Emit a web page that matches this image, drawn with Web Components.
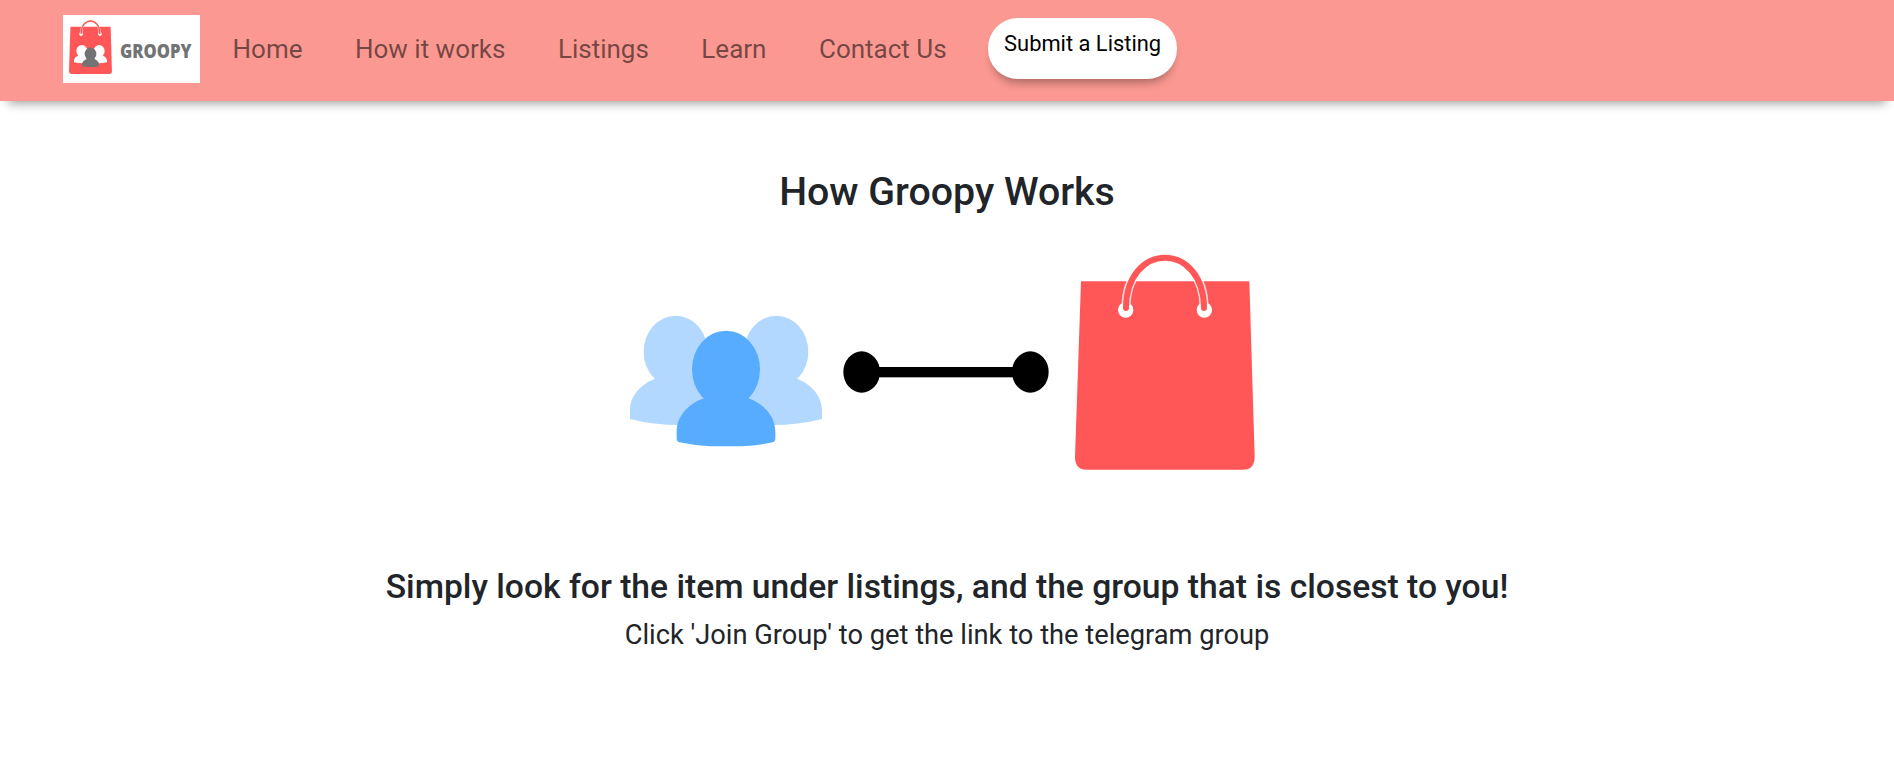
<!DOCTYPE html>
<html lang="en">
<head>
<meta charset="utf-8">
<title>Groopy</title>
<style>
    body {
        margin: 0;
        background: white;
        color: #212529;
        font-family: Roboto, "Liberation Sans", sans-serif;
    }
</style>
</head>
<body>
<groopy-navbar>
    <groopy-logo slot="brand"></groopy-logo>
    <nav-link href="#">Home</nav-link>
    <nav-link href="#">How it works</nav-link>
    <nav-link href="#">Listings</nav-link>
    <nav-link href="#">Learn</nav-link>
    <nav-link href="#">Contact Us</nav-link>
    <pill-button slot="action">Submit a Listing</pill-button>
</groopy-navbar>
<how-it-works>
    <span slot="title">How Groopy Works</span>
    <span slot="lead">Simply look for the item under listings, and the group that is closest to you!</span>
    <span slot="hint">Click 'Join Group' to get the link to the telegram group</span>
</how-it-works>

<script>
/// Base class: renders the subclass' markup into an open shadow root.
class GroopyElement extends HTMLElement {

    connectedCallback() {
        if (this.shadowRoot) {
            return
        }
        this.attachShadow({mode: "open"}).innerHTML = this.render()
    }

}

/// Three people. Colors come from --people-front and --people-back.
class PeopleIcon extends GroopyElement {

    render() {
        return `
            <style>
                :host { display: block; }
                svg { display: block; width: 100%; height: 100%; }
                .back { fill: var(--people-back, #b2d8ff); }
                .front { fill: var(--people-front, #58acff); }
            </style>
            <svg viewBox="0 0 576 396" preserveAspectRatio="none" aria-hidden="true">
                <g class="back">
                    <ellipse cx="137" cy="110" rx="96" ry="108"/>
                    <path d="M75 191C30 208 0 245 0 285V312Q70 330 150 330H230V140H100Z"/>
                    <ellipse cx="439" cy="110" rx="96" ry="108"/>
                    <path d="M501 191C546 208 576 245 576 285V312Q506 330 426 330H346V140H476Z"/>
                </g>
                <g class="front">
                    <ellipse cx="288" cy="163" rx="102" ry="116"/>
                    <path d="M222 250C170 268 140 308 140 350V370Q140 380 148 382Q190 391 240 394H336Q386 391 428 382Q436 380 436 370V350C436 308 406 268 355 250L330 220H246Z"/>
                </g>
            </svg>
        `
    }

}

/// Line with a dot on both ends.
class ConnectorIcon extends GroopyElement {

    render() {
        return `
            <style>
                :host { display: block; }
                svg { display: block; width: 100%; height: 100%; }
            </style>
            <svg viewBox="0 0 618 126" preserveAspectRatio="none" aria-hidden="true">
                <rect x="80" y="48" width="460" height="31"/>
                <ellipse cx="56" cy="63" rx="55" ry="62"/>
                <ellipse cx="562" cy="63" rx="55" ry="62"/>
            </svg>
        `
    }

}

class BagIcon extends GroopyElement {

    render() {
        return `
            <style>
                :host { display: block; }
                svg { display: block; width: 100%; height: 100%; }
            </style>
            <svg viewBox="0 0 540 648" preserveAspectRatio="none" aria-hidden="true">
                <path fill="#ff5757" d="M18 82H523L539 608Q539 647 503 647H35Q0 647 0 608Z"/>
                <circle cx="152" cy="168" r="23" fill="white"/>
                <circle cx="388" cy="168" r="23" fill="white"/>
                <g fill="none" stroke-linecap="round">
                    <path stroke="white" stroke-opacity=".8" stroke-width="27" d="M153 160C153 65 210 11 270 11S387 65 387 160"/>
                    <path stroke="#ff5757" stroke-width="18" d="M153 162C153 65 210 11 270 11S387 65 387 162"/>
                </g>
            </svg>
        `
    }

}

class GroopyLogo extends GroopyElement {

    render() {
        return `
            <style>
                :host {
                    display: flex;
                    box-sizing: border-box;
                    width: 137px;
                    height: 68px;
                    padding: 5px 6px;
                    gap: 7.5px;
                    background: white;
                }

                .mark {
                    position: relative;
                    flex: none;
                    width: 43px;
                    height: 54px;
                }

                bag-icon {
                    height: 100%;
                }

                people-icon {
                    --people-back: white;
                    --people-front: #737373;
                    position: absolute;
                    left: 5px;
                    top: 25px;
                    width: 33px;
                    height: 22px;
                }

                .name {
                    flex: none;
                    margin-top: 18px;
                    color: #737373;
                    font: 800 19px/26px "Open Sans", "Noto Sans", sans-serif;
                    transform: scaleX(.875);
                    transform-origin: left;
                }
            </style>
            <div class="mark">
                <bag-icon></bag-icon>
                <people-icon></people-icon>
            </div>
            <span class="name">GROOPY</span>
        `
    }

}

class NavLink extends GroopyElement {

    render() {
        return `
            <style>
                :host { display: block; }

                a {
                    color: rgba(0, 0, 0, .55);
                    font-size: 26px;
                    line-height: 1.5;
                    text-decoration: none;
                    white-space: nowrap;
                }

                a:hover {
                    color: rgba(0, 0, 0, .7);
                }
            </style>
            <a href="${this.getAttribute("href")}"><slot></slot></a>
        `
    }

}

class PillButton extends GroopyElement {

    render() {
        return `
            <style>
                :host { display: block; }

                button {
                    display: block;
                    height: 61px;
                    padding: 9px 16px 19px;
                    border: 0;
                    border-radius: 30px;
                    background: white;
                    box-shadow: 0 8px 8px -4px rgba(0, 0, 0, .3);
                    color: black;
                    font: inherit;
                    font-size: 21.9px;
                    line-height: 33px;
                    white-space: nowrap;
                    cursor: pointer;
                }
            </style>
            <button type="button"><slot></slot></button>
        `
    }

}

class GroopyNavbar extends GroopyElement {

    render() {
        return `
            <style>
                :host { display: block; }

                header {
                    display: flex;
                    align-items: flex-start;
                    box-sizing: border-box;
                    height: 101px;
                    padding: 15px 63px 0;
                    background: #fa9891;
                    box-shadow: 0 10px 10px -8px rgba(0, 0, 0, .4);
                }

                nav {
                    display: flex;
                    gap: 52.5px;
                    margin: 15px 41.5px 0 32.5px;
                }

                slot[name=action]::slotted(*) {
                    margin-top: 3px;
                }
            </style>
            <header>
                <slot name="brand"></slot>
                <nav><slot></slot></nav>
                <slot name="action"></slot>
            </header>
        `
    }

}

class HowItWorks extends GroopyElement {

    render() {
        return `
            <style>
                :host {
                    display: block;
                    padding-top: 68px;
                    text-align: center;
                }

                h1, h2, p {
                    margin: 0;
                    font-weight: 500;
                    line-height: 1.2;
                }

                h1 { font-size: 39.3px; }

                h2 { font-size: 33.65px; }

                p {
                    margin-top: 11px;
                    font-size: 27.25px;
                    font-weight: 400;
                }

                .picture {
                    display: flex;
                    justify-content: center;
                    align-items: flex-start;
                    margin: 38px 9px 97px 0;
                }

                people-icon {
                    width: 192px;
                    height: 132px;
                    margin: 61px 21px 0 0;
                }

                connector-icon {
                    width: 206px;
                    height: 42px;
                    margin: 96.5px 26px 0 0;
                }

                bag-icon {
                    width: 180px;
                    height: 216px;
                }
            </style>
            <main>
                <h1><slot name="title"></slot></h1>
                <div class="picture">
                    <people-icon></people-icon>
                    <connector-icon></connector-icon>
                    <bag-icon></bag-icon>
                </div>
                <h2><slot name="lead"></slot></h2>
                <p><slot name="hint"></slot></p>
            </main>
        `
    }

}

customElements.define("people-icon", PeopleIcon)
customElements.define("connector-icon", ConnectorIcon)
customElements.define("bag-icon", BagIcon)
customElements.define("groopy-logo", GroopyLogo)
customElements.define("nav-link", NavLink)
customElements.define("pill-button", PillButton)
customElements.define("groopy-navbar", GroopyNavbar)
customElements.define("how-it-works", HowItWorks)
</script>
</body>
</html>
